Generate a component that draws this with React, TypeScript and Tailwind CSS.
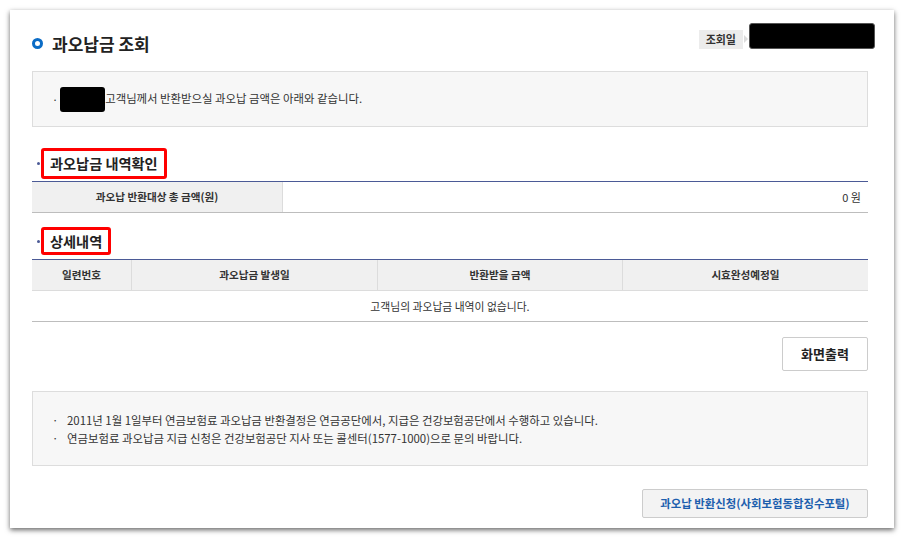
import React from "react";

const font = { fontFamily: '"Noto Sans CJK KR", "Noto Sans", sans-serif' };

function SectionHeading({ title, h }: { title: string; h: string }) {
  return (
    <div className="flex items-center">
      <span className="ml-[5px] w-[3px] h-[3px] rounded-full bg-[#4b5a96]" />
      <div className={`ml-[1px] ${h} flex items-center border-[3px] border-[#ff0000] rounded-[3px] px-[6px]`}>
        <span className="text-[14.2px] font-bold text-[#222] leading-none">{title}</span>
      </div>
    </div>
  );
}

export default function App() {
  return (
    <div className="w-[904px] h-[538px] bg-white p-[10px] overflow-hidden" style={font}>
      <div className="w-[884px] h-[518px] bg-white shadow-[0_2px_5px_rgba(0,0,0,0.6)] pt-[13px] pl-[22px] pr-[26px] flex flex-col">
        {/* header */}
        <div className="flex justify-between items-start h-[48px]">
          <div className="flex items-center mt-[8px] h-[24px]">
            <span className="w-[11px] h-[11px] rounded-full border-[3px] border-[#0b6cc6]" />
            <span className="ml-[9px] text-[17px] font-bold text-[#222] leading-none">과오납금 조회</span>
          </div>
          <div className="flex items-end mr-[-7px]">
            <div className="h-[19px] px-[7px] bg-[#ececec] flex items-center text-[11px] font-bold text-[#333]">조회일</div>
            <span className="mx-[1px] mb-[6px] w-0 h-0 border-y-[4px] border-y-transparent border-l-[4px] border-l-[#dcdcdc]" />
            <div className="w-[126px] h-[26px] bg-black rounded-[3px] border border-[#555]" />
          </div>
        </div>

        {/* info box */}
        <div className="h-[56px] bg-[#f7f7f7] border border-[#dddddd] flex items-center pl-[19px]">
          <span className="text-[11px] text-[#333]">·</span>
          <span className="ml-[2px] w-[45px] h-[25px] bg-black rounded-[3px]" />
          <span className="text-[11.4px] text-[#333]">고객님께서 반환받으실 과오납 금액은 아래와 같습니다.</span>
        </div>

        {/* heading 1 */}
        <div className="mt-[21px]">
          <SectionHeading title="과오납금 내역확인" h="h-[31px]" />
        </div>

        {/* table 1 */}
        <div className="mt-[2px] border-t border-t-[#4b5a96] border-b border-b-[#bdbdbd] flex h-[32px]">
          <div className="w-[251px] bg-[#f0f0f0] border-r border-r-[#dcdcdc] flex items-center justify-center text-[10.6px] font-bold text-[#333]">
            과오납 반환대상 총 금액(원)
          </div>
          <div className="flex-1 flex items-center justify-end pr-[7px] text-[11px] text-[#333]">0 원</div>
        </div>

        {/* heading 2 */}
        <div className="mt-[14px]">
          <SectionHeading title="상세내역" h="h-[28px]" />
        </div>

        {/* table 2 */}
        <div className="mt-[4px] border-t border-t-[#4b5a96] border-b border-b-[#bdbdbd]">
          <div className="grid grid-cols-[100px_246px_245px_1fr] h-[31px] bg-[#f0f0f0] border-b border-b-[#dcdcdc] text-[10.6px] font-bold text-[#333]">
            <div className="flex items-center justify-center border-r border-r-[#dcdcdc]">일련번호</div>
            <div className="flex items-center justify-center border-r border-r-[#dcdcdc]">과오납금 발생일</div>
            <div className="flex items-center justify-center border-r border-r-[#dcdcdc]">반환받을 금액</div>
            <div className="flex items-center justify-center">시효완성예정일</div>
          </div>
          <div className="h-[30px] flex items-center justify-center text-[10.8px] text-[#333]">
            고객님의 과오납금 내역이 없습니다.
          </div>
        </div>

        {/* print button */}
        <div className="mt-[15px] flex justify-end">
          <button className="w-[86px] h-[34px] bg-white border border-[#cccccc] rounded-[2px] text-[13px] font-bold text-[#222]">
            화면출력
          </button>
        </div>

        {/* info box 2 */}
        <div className="mt-[20px] h-[75px] bg-[#f7f7f7] border border-[#dddddd] flex flex-col justify-center pl-[19px] text-[11.4px] text-[#333] leading-[18px]">
          <div className="flex">
            <span className="w-[15px]">·</span>
            <span>2011년 1월 1일부터 연금보험료 과오납금 반환결정은 연금공단에서, 지급은 건강보험공단에서 수행하고 있습니다.</span>
          </div>
          <div className="flex">
            <span className="w-[15px]">·</span>
            <span>연금보험료 과오납금 지급 신청은 건강보험공단 지사 또는 콜센터(1577-1000)으로 문의 바랍니다.</span>
          </div>
        </div>

        {/* apply button */}
        <div className="mt-[23px] flex justify-end">
          <button className="w-[226px] h-[29px] bg-[#f3f3f3] border border-[#cccccc] rounded-[2px] text-[11.4px] font-bold text-[#1d5fae]">
            과오납 반환신청(사회보험동합징수포털)
          </button>
        </div>
      </div>
    </div>
  );
}
